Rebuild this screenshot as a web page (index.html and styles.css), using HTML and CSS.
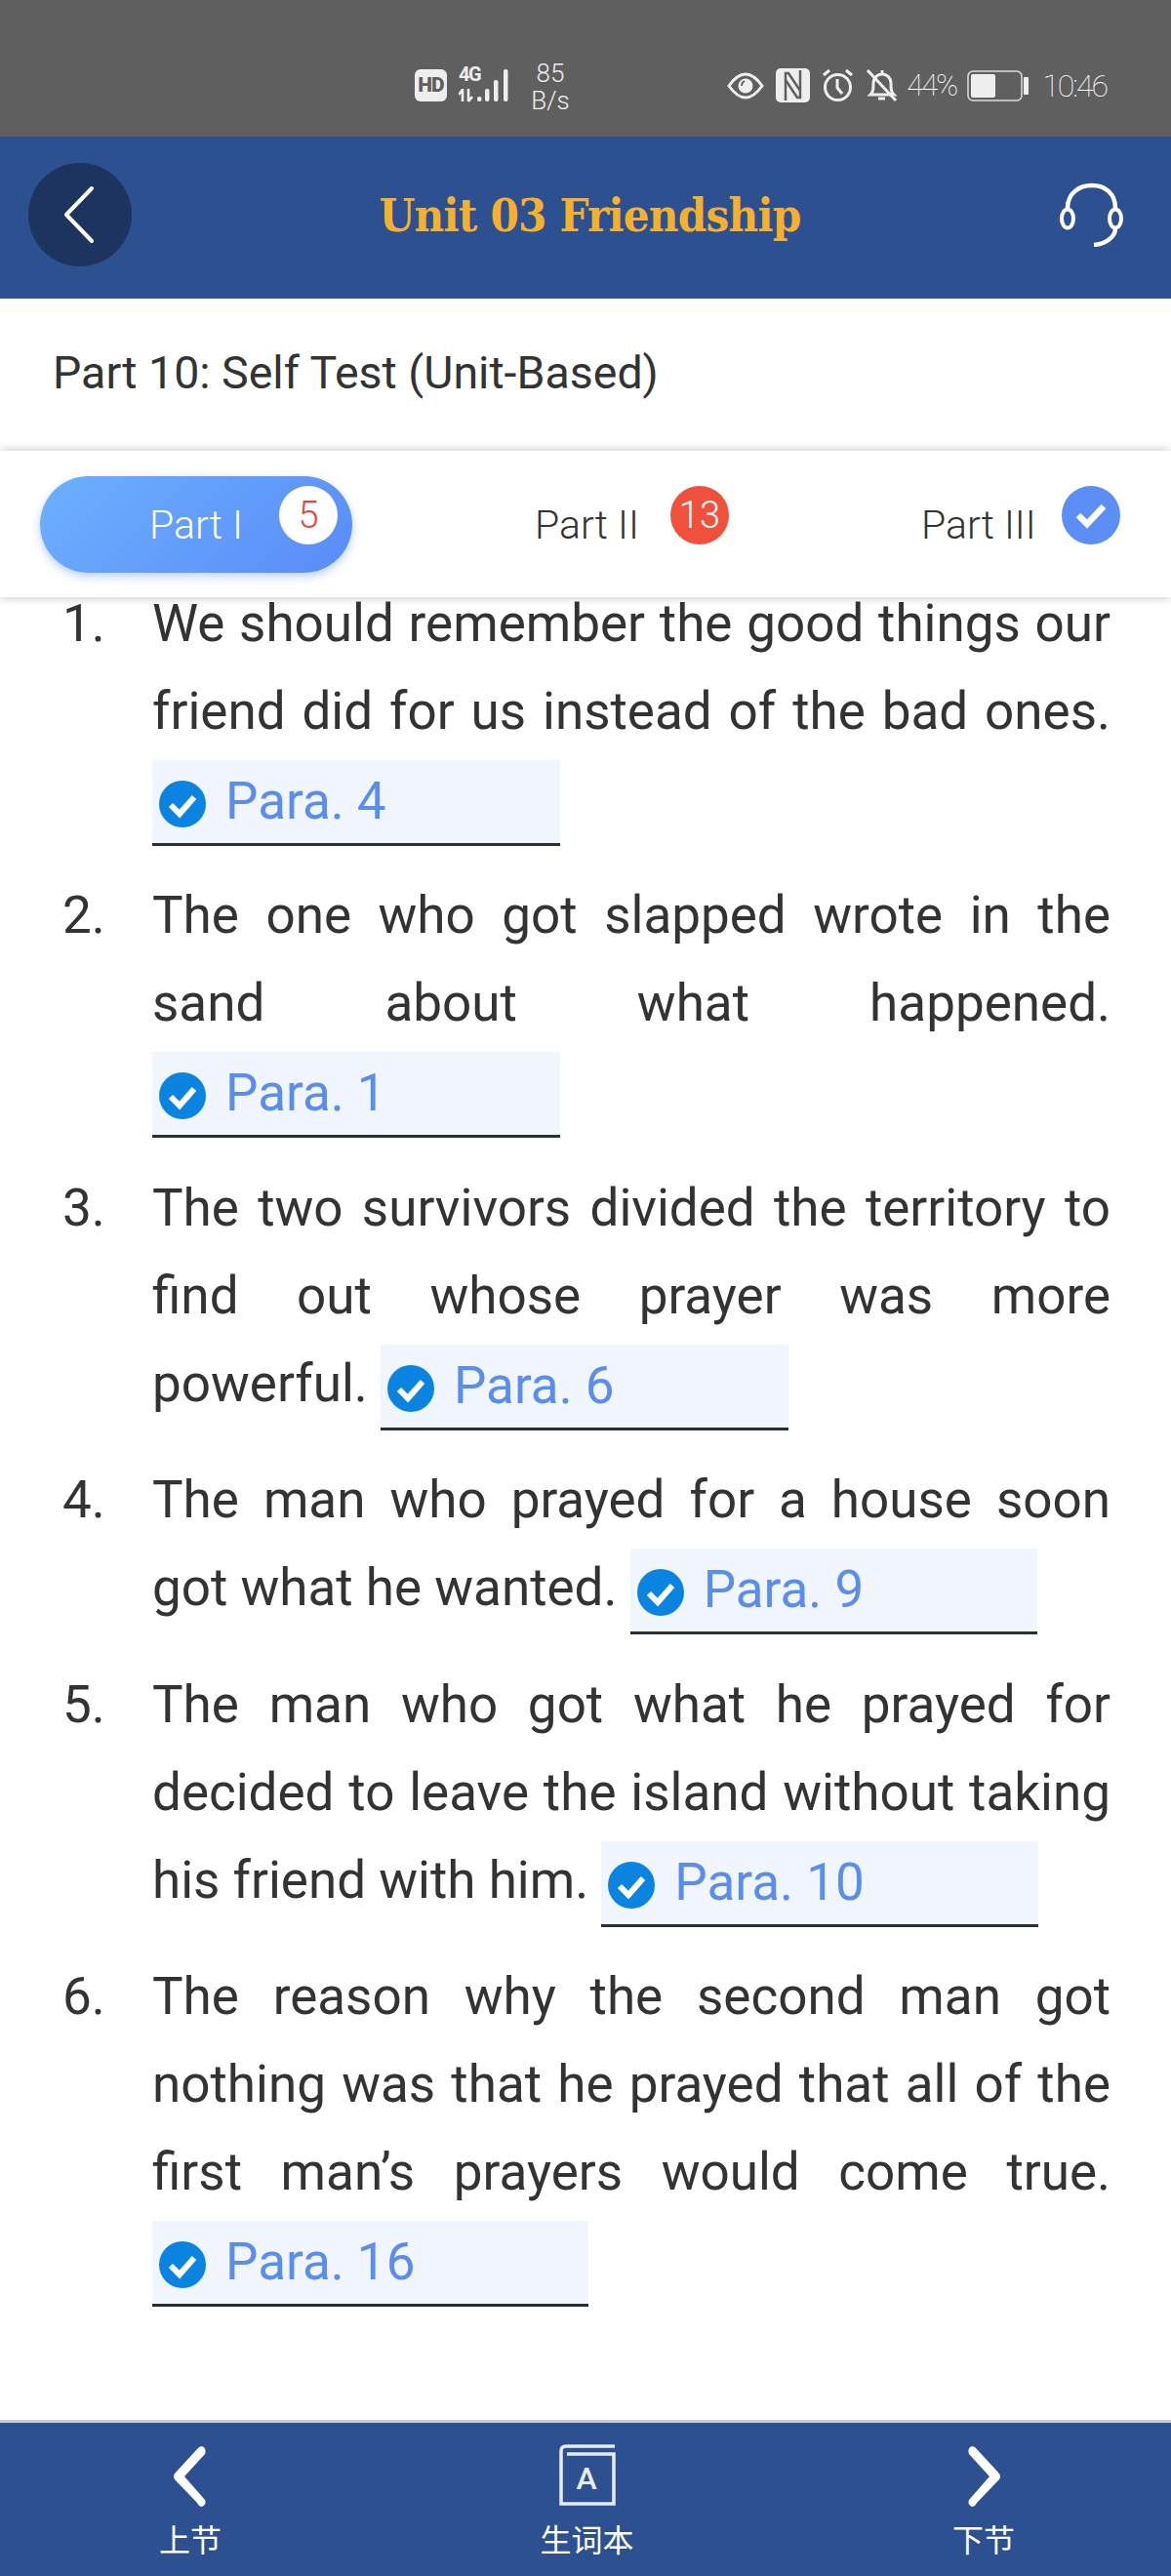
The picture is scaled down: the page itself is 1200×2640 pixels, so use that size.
FILE: index.html
```html
<!DOCTYPE html>
<html lang="en">
<head>
  <meta charset="UTF-8" />
  <meta name="viewport" content="width=device-width, initial-scale=1" />
  <title>Unit 03 Friendship</title>
  <link rel="stylesheet" href="styles.css">
</head>
<body>

<div class="status-bar">
  <div class="status-left">
    <span class="hd">HD</span>
    <div class="net">
      <span class="net-type">4G</span>
      <svg class="net-bars" width="55" height="36" viewBox="0 0 55 36">
        <path d="M4 34V21M0 27l4-5M10 34V21M10 34l4-5" stroke="#eee" stroke-width="2.600" fill="none"/>
        <rect x="19" y="29" width="4.500" height="5" rx="2" fill="#eee"/>
        <rect x="27" y="21" width="4.500" height="13" rx="2" fill="#eee"/>
        <rect x="36" y="12" width="4.500" height="22" rx="2" fill="#eee"/>
        <rect x="46" y="1" width="4.500" height="33" rx="2" fill="#eee"/>
      </svg>
    </div>
    <div class="speed">85<br>B/s</div>
  </div>
  <div class="status-right">
    <svg width="38" height="30" viewBox="0 0 38 30">
      <path d="M2 15C9 5 14 3 19 3s10 2 17 12c-7 10-12 12-17 12S9 25 2 15z" fill="none" stroke="#eee" stroke-width="3"/>
      <circle cx="19" cy="15" r="7.500" fill="#eee"/>
      <path d="M15 15c0-3 1-4 3-5" fill="none" stroke="#5f5f5f" stroke-width="1.800"/>
    </svg>
    <svg width="35" height="35" viewBox="0 0 35 35">
      <rect width="35" height="35" rx="5" fill="#eee"/>
      <path d="M10 33V5h3l12 18" stroke="#5f5f5f" stroke-width="2.500" fill="none"/>
      <path d="M25 2v28h-3L10 12" stroke="#5f5f5f" stroke-width="2.500" fill="none"/>
    </svg>
    <svg width="33" height="35" viewBox="0 0 33 35">
      <circle cx="16.500" cy="19.500" r="13" fill="none" stroke="#eee" stroke-width="3"/>
      <path d="M16 11v9l5 6M2 7l6-5M31 7l-6-5" stroke="#eee" stroke-width="3" fill="none"/>
    </svg>
    <svg width="33" height="35" viewBox="0 0 33 35">
      <path d="M5 27c3-3 3-6 3-12 0-5 4-9 9-9s9 4 9 9c0 6 0 9 3 12z" fill="none" stroke="#eee" stroke-width="3"/>
      <path d="M17 6V2M13 31h7M2 2l29 31" stroke="#eee" stroke-width="3"/>
    </svg>
    <span class="thin battery-pct">44%</span>
    <svg width="63" height="32" viewBox="0 0 63 32">
      <rect x="1" y="1" width="55" height="30" rx="5" fill="none" stroke="#ddd" stroke-width="1.500"/>
      <rect x="4" y="4" width="25" height="24" rx="2" fill="#eee"/>
      <rect x="58" y="7" width="5" height="18" rx="1" fill="#eee"/>
    </svg>
    <span class="thin clock">10:46</span>
  </div>
</div>

<header class="top-bar">
  <a class="back-btn">
    <svg width="34" height="60" viewBox="0 0 34 60">
      <path d="M30 3L4 30l26 27" transform="translate(-1 0)" fill="none" stroke="#fff" stroke-width="4" stroke-linecap="round" stroke-linejoin="round"/>
    </svg>
  </a>
  <h1 class="page-title">Unit 03 Friendship</h1>
  <svg class="headset" width="66" height="66" viewBox="0 0 66 66">
    <path d="M8 26C8 11 20 3 33 3s24 8 24 23" fill="none" stroke="#fff" stroke-width="4.500"/>
    <ellipse cx="8" cy="37" rx="6" ry="9.500" fill="none" stroke="#fff" stroke-width="4"/>
    <ellipse cx="57" cy="37" rx="6" ry="9.500" fill="none" stroke="#fff" stroke-width="4"/>
    <path d="M57 47c0 9-10 16-22 17" fill="none" stroke="#fff" stroke-width="4.500"/>
  </svg>
</header>

<div class="sub-title">Part 10: Self Test (Unit-Based)</div>

<nav class="tabs">
  <div class="tab tab-active">
    <span>Part I</span>
    <span class="badge badge-white">5</span>
  </div>
  <div class="tab tab-two">
    <span>Part II</span>
    <span class="badge badge-red">13</span>
  </div>
  <div class="tab tab-three">
    <span>Part III</span>
    <span class="badge badge-blue">
      <svg width="34" height="28" viewBox="0 0 34 28"><path d="M4 14l9 9L30 5" fill="none" stroke="#fff" stroke-width="6.500"/></svg>
    </span>
  </div>
</nav>

<ol class="questions">
  <li class="question">
    <span class="num">1.</span>
    <p>We should remember the good things our friend did for us instead of the bad ones. <span class="answer"><svg class="tick" viewBox="0 0 48 48"><circle cx="24" cy="24" r="24" fill="#0a84e0"/><path d="M12 25l9 9 15-17" fill="none" stroke="#fff" stroke-width="6"/></svg>Para. 4</span></p>
  </li>
  <li class="question">
    <span class="num">2.</span>
    <p>The one who got slapped wrote in the sand about what happened. <span class="answer"><svg class="tick" viewBox="0 0 48 48"><circle cx="24" cy="24" r="24" fill="#0a84e0"/><path d="M12 25l9 9 15-17" fill="none" stroke="#fff" stroke-width="6"/></svg>Para. 1</span></p>
  </li>
  <li class="question">
    <span class="num">3.</span>
    <p>The two survivors divided the territory to find out whose prayer was more powerful. <span class="answer"><svg class="tick" viewBox="0 0 48 48"><circle cx="24" cy="24" r="24" fill="#0a84e0"/><path d="M12 25l9 9 15-17" fill="none" stroke="#fff" stroke-width="6"/></svg>Para. 6</span></p>
  </li>
  <li class="question">
    <span class="num">4.</span>
    <p>The man who prayed for a house soon got what he wanted. <span class="answer"><svg class="tick" viewBox="0 0 48 48"><circle cx="24" cy="24" r="24" fill="#0a84e0"/><path d="M12 25l9 9 15-17" fill="none" stroke="#fff" stroke-width="6"/></svg>Para. 9</span></p>
  </li>
  <li class="question">
    <span class="num">5.</span>
    <p>The man who got what he prayed for decided to leave the island without taking his friend with him. <span class="answer"><svg class="tick" viewBox="0 0 48 48"><circle cx="24" cy="24" r="24" fill="#0a84e0"/><path d="M12 25l9 9 15-17" fill="none" stroke="#fff" stroke-width="6"/></svg>Para. 10</span></p>
  </li>
  <li class="question">
    <span class="num">6.</span>
    <p>The reason why the second man got nothing was that he prayed that all of the first man’s prayers would come true. <span class="answer"><svg class="tick" viewBox="0 0 48 48"><circle cx="24" cy="24" r="24" fill="#0a84e0"/><path d="M12 25l9 9 15-17" fill="none" stroke="#fff" stroke-width="6"/></svg>Para. 16</span></p>
  </li>
</ol>

<footer class="bottom-bar">
  <a class="nav-item">
    <svg width="38" height="66" viewBox="0 0 38 66">
      <path d="M31 2Q36 4 34 10L13 33l21 24Q36 62 31 64 28 64 26 60L3 36Q1 33 3 30L26 5Q28 2 31 2z" fill="#fff"/>
    </svg>
    <span>上节</span>
  </a>
  <a class="nav-item">
    <svg width="58" height="66" viewBox="0 0 58 66">
      <path d="M57 2H7Q2 2 2 7V61H56V10H8" fill="none" stroke="#e8ecf6" stroke-width="3.500"/>
      <text x="28" y="46" text-anchor="middle" class="book-letter">A</text>
    </svg>
    <span>生词本</span>
  </a>
  <a class="nav-item">
    <svg width="38" height="66" viewBox="0 0 38 66">
      <path d="M7 2Q2 4 4 10l21 23L4 57Q2 62 7 64 10 64 12 60L35 36Q37 33 35 30L12 5Q10 2 7 2z" fill="#fff"/>
    </svg>
    <span>下节</span>
  </a>
</footer>

</body>
</html>
```

FILE: styles.css
```css
body {
  margin: 0;
  height: 2640px;
  overflow: hidden;
  display: flex;
  flex-direction: column;
  background-color: #fff;
  color: #333;
  font-family: Roboto, 'Noto Sans CJK SC', sans-serif;
}

/* status bar */
.status-bar {
  height: 140px;
  box-sizing: border-box;
  padding: 35px 66px 0 425px;
  display: flex;
  align-items: center;
  justify-content: space-between;
  background-color: #5f5f5f;
  color: #eee;
}
.status-left, .status-right {
  display: flex;
  align-items: center;
}
.hd {
  width: 33px;
  height: 33px;
  border-radius: 6px;
  background-color: #eee;
  color: #5f5f5f;
  font-size: 21px;
  font-weight: 900;
  line-height: 33px;
  text-align: center;
  letter-spacing: -1px;
}
.net {
  position: relative;
  margin-left: 12px;
  width: 55px;
  height: 36px;
}
.net-type {
  position: absolute;
  left: 0;
  top: -6px;
  font-size: 20px;
  font-weight: 700;
  letter-spacing: -1.500px;
}
.speed {
  width: 44px;
  margin-left: 17px;
  padding-top: 3px;
  font-size: 26px;
  line-height: 28px;
  font-weight: 300;
  text-align: center;
}
.status-right svg {
  margin-right: 12px;
}
.thin {
  font-weight: 100;
  color: #fff;
}
.battery-pct {
  font-size: 31px;
  letter-spacing: -2px;
  margin-right: 11px;
  margin-left: -3px;
}
.clock {
  font-size: 32px;
  letter-spacing: -2px;
  margin-left: 2px;
}

/* header */
.top-bar {
  height: 166px;
  box-sizing: border-box;
  padding: 0 48px 6px 29px;
  display: flex;
  align-items: center;
  justify-content: space-between;
  background-color: #2d5090;
}
.back-btn {
  width: 106px;
  height: 106px;
  border-radius: 50%;
  background-color: #1d3360;
  display: flex;
  align-items: center;
  justify-content: center;
}
.page-title {
  margin: 0 0 0 -12px;
  color: #f5b02e;
  font-family: 'DejaVu Serif Condensed', 'DejaVu Serif', serif;
  font-size: 47px;
  font-weight: bold;
  letter-spacing: -0.800px;
}

.sub-title {
  height: 156px;
  box-sizing: border-box;
  padding: 50px 54px 0;
  font-size: 46.500px;
  line-height: 52px;
}

/* tabs */
.tabs {
  position: relative;
  z-index: 1;
  height: 150px;
  box-sizing: border-box;
  padding: 26px 0 0 41px;
  display: flex;
  align-items: flex-start;
  background-color: #fff;
  box-shadow: 0 0 10px rgba(0, 0, 0, 0.25);
}
.tab {
  height: 99px;
  display: flex;
  align-items: center;
  gap: 32px;
  font-size: 41px;
  font-weight: 300;
}
.tab .badge {
  margin-top: -20px;
}
.tab-active {
  width: 320px;
  box-sizing: border-box;
  padding-left: 112px;
  border-radius: 50px;
  background: linear-gradient(135deg, #6cb0ff, #5a8cf8);
  box-shadow: 0 4px 10px rgba(90, 140, 248, 0.4);
  color: #fff;
  gap: 37px;
}
.tab-two {
  margin-left: 187px;
}
.tab-three {
  margin-left: 197px;
  gap: 26px;
}
.badge {
  width: 60px;
  height: 60px;
  border-radius: 50%;
  display: flex;
  align-items: center;
  justify-content: center;
  font-size: 38px;
}
.badge-white {
  background-color: #fff;
  color: #e0483a;
}
.badge-red {
  background-color: #f0513c;
  color: #fff;
}
.badge-blue {
  background-color: #5b8ff6;
}

/* questions */
.questions {
  flex: 1;
  margin: -18px 0 0;
  padding: 0 62px 0 64px;
  list-style: none;
  font-size: 53px;
  line-height: 90px;
  font-weight: 400;
}
.question {
  display: grid;
  grid-template-columns: 92px 1fr;
  margin-bottom: 26.400px;
}
.question p {
  margin: 0;
  text-align: justify;
}
.answer {
  display: inline-block;
  box-sizing: border-box;
  padding: 0 178px 0 7px;
  line-height: 85px;
  vertical-align: -2px;
  border-bottom: 3px solid #2a2e35;
  background-color: #f0f5fe;
  color: #5b8def;
}
.tick {
  width: 48px;
  height: 48px;
  margin-right: 20px;
  vertical-align: -9px;
}

/* bottom nav */
.bottom-bar {
  height: 160px;
  box-sizing: border-box;
  padding: 22px 144px 0 147px;
  display: flex;
  justify-content: space-between;
  background-color: #2d5090;
  border-top: 3px solid #c8cad8;
}
.nav-item {
  width: 96px;
  display: flex;
  flex-direction: column;
  align-items: center;
  color: #fff;
  font-size: 32px;
  line-height: 38px;
}
.nav-item span {
  margin-top: 14px;
}
.book-letter {
  fill: #e8ecf6;
  font-family: Roboto, sans-serif;
  font-size: 32px;
  font-weight: 500;
}
```
